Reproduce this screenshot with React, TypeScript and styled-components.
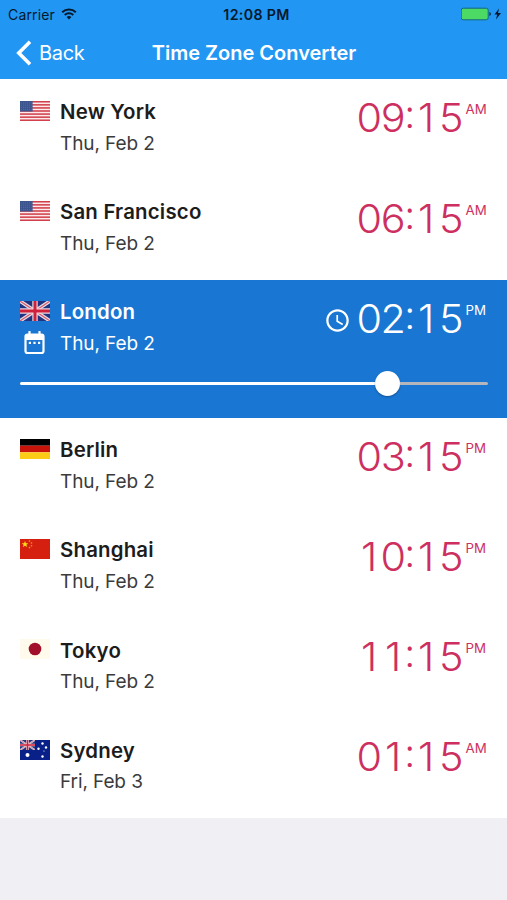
import React from "react";
import styled, { createGlobalStyle } from "styled-components";

const GlobalStyle = createGlobalStyle`
  * { box-sizing: border-box; }
  body {
    margin: 0;
    background: #efeff4;
    font-family: Inter, "Liberation Sans", sans-serif;
  }
`;

const Screen = styled.div`
  display: flex;
  flex-direction: column;
  width: 507px;
  height: 900px;
  overflow: hidden;
  background: #efeff4;
`;

const Header = styled.header`
  height: 79.4px;
  background: #2196f3;
`;

const StatusBar = styled.div`
  display: grid;
  grid-template-columns: 1fr auto 1fr;
  align-items: center;
  height: 27px;
  padding: 0 5px 0 8px;
  color: #06192c;
  font-size: 13.8px;
  line-height: 27px;
`;

const Carrier = styled.div`
  display: flex;
  align-items: center;
  gap: 6px;
  padding-top: 1px;
  font-size: 14px;
  letter-spacing: 0.15px;

  svg {
    margin-top: -2px;
  }
`;

const Clock = styled.div`
  font-size: 14.2px;
  font-weight: 600;
  letter-spacing: 0.35px;
  margin-left: 3px;
`;

const Power = styled.div`
  display: flex;
  justify-content: flex-end;
  align-items: center;
`;

const NavBar = styled.nav`
  display: grid;
  grid-template-columns: 137px 1fr 137px;
  align-items: center;
  height: 52px;
  color: #fff;
`;

const BackButton = styled.button`
  display: flex;
  align-items: center;
  gap: 7px;
  padding: 0 0 0 16px;
  border: 0;
  background: none;
  color: inherit;
  font: 400 20px/26px Inter, sans-serif;
  letter-spacing: -0.3px;
`;

const Title = styled.h1`
  margin: 0 0 0 1px;
  font-size: 20px;
  font-weight: 600;
  line-height: 26px;
  text-align: center;
  letter-spacing: 0;
  white-space: nowrap;
`;

const List = styled.ul`
  margin: 0;
  padding: 0;
  list-style: none;
`;

const Row = styled.li<{ $active: boolean }>`
  height: ${(p) => (p.$active ? "138px" : "100.13px")};
  padding: 19px 19px 0 20px;
  background: ${(p) => (p.$active ? "#1976d2" : "#fff")};
  color: ${(p) => (p.$active ? "#fff" : "#1c1c1c")};
`;

const RowMain = styled.div`
  display: grid;
  grid-template-columns: 40px 1fr auto;
  height: 64px;
`;

const IconColumn = styled.div`
  display: flex;
  flex-direction: column;
  gap: 9px;
  padding-top: 2.5px;
`;

const Place = styled.div`
  display: flex;
  flex-direction: column;
  padding-top: 0.7px;
`;

const City = styled.div`
  font-size: 20.4px;
  font-weight: 600;
  line-height: 26px;
  letter-spacing: 0.2px;
`;

const DateText = styled.div<{ $active: boolean }>`
  margin-top: 5.5px;
  font-size: 19px;
  line-height: 26px;
  letter-spacing: -0.1px;
  color: ${(p) => (p.$active ? "#fff" : "#3b3b3b")};
`;

const Time = styled.div<{ $active: boolean }>`
  display: flex;
  align-items: flex-start;
  color: ${(p) => (p.$active ? "#fff" : "#cd2f60")};
`;

const ClockSlot = styled.span`
  display: flex;
  margin: 8.5px 6px 0 0;
`;

const Digits = styled.span`
  display: flex;
  font-size: 39px;
  font-weight: 300;
  line-height: 40px;
  font-feature-settings: "case";
`;

const Glyph = styled.span<{ $narrow: boolean }>`
  display: flex;
  justify-content: center;
  width: ${(p) => (p.$narrow ? "8.8px" : "24.4px")};
  transform: ${(p) => (p.$narrow ? "none" : "scaleX(1.06)")};
`;

const Meridiem = styled.span`
  width: 25px;
  margin-top: 3px;
  padding-left: 2.5px;
  font-size: 13.3px;
  line-height: 16px;
  white-space: nowrap;
`;

const Slider = styled.div`
  display: flex;
  align-items: center;
  height: 42px;
`;

const TrackFill = styled.div`
  width: 355px;
  height: 3px;
  border-radius: 2px 0 0 2px;
  background: #fff;
`;

const Thumb = styled.div`
  width: 25px;
  height: 25px;
  border-radius: 50%;
  background: #fff;
  box-shadow: 0 1px 2px rgba(0, 0, 0, 0.3);
`;

const TrackRest = styled.div`
  flex: 1;
  height: 3px;
  border-radius: 0 2px 2px 0;
  background: #b4b6bc;
`;

const FlagSvg = styled.svg`
  display: block;
  width: 30px;
  height: 20px;
`;

const DateIcon = styled.svg`
  display: block;
  width: 21px;
  height: 24px;
  margin: 0.5px 0 0 4px;
`;

type Country = "us" | "gb" | "de" | "cn" | "jp" | "au";

function UnionJack() {
  return (
    <>
      <path fill="#20347f" d="M0 0h30v20H0z" />
      <path d="M0 0l30 20M30 0L0 20" stroke="#e3dde6" strokeWidth="3.6" />
      <path d="M0 0l30 20M30 0L0 20" stroke="#d8576c" strokeWidth="1.1" />
      <path d="M15 0v20M0 10h30" stroke="#efd5dc" strokeWidth="5.4" />
      <path d="M15 0v20M0 10h30" stroke="#d0213a" strokeWidth="3" />
    </>
  );
}

const flagArt: Record<Country, React.ReactNode> = {
  us: (
    <>
      <path fill="#fbe9eb" d="M0 0h30v20H0z" />
      {[0, 1, 2, 3, 4, 5, 6].map((i) => (
        <rect key={i} y={i * 3.077} width="30" height="1.54" fill="#d2404c" />
      ))}
      <path fill="#3c558f" d="M0 0h12.6v10.5H0z" />
      <path
        d="M1 2h11M1 4.2h11M1 6.4h11M1 8.6h11"
        stroke="#8493b8"
        strokeWidth=".5"
        strokeDasharray=".7 1.4"
      />
    </>
  ),
  gb: <UnionJack />,
  de: (
    <>
      <path d="M0 0h30v6.7H0z" />
      <path fill="#c8130b" d="M0 6.7h30v6.6H0z" />
      <path fill="#fccb16" d="M0 13.3h30V20H0z" />
    </>
  ),
  cn: (
    <>
      <path fill="#d5200f" d="M0 0h30v20H0z" />
      <path
        fill="#fddb16"
        d="M5 1.900l.9 2.300h2.400L6.400 5.700l.7 2.400L5 6.700 2.900 8.100l.7-2.400L1.700 4.200h2.400z"
      />
      <g fill="#f0a012">
        <circle cx="9.500" cy="2" r=".8" />
        <circle cx="11.500" cy="4" r=".8" />
        <circle cx="11.500" cy="6.700" r=".8" />
        <circle cx="9.500" cy="8.600" r=".8" />
      </g>
    </>
  ),
  jp: (
    <>
      <path fill="#fffaeb" d="M0 0h30v20H0z" />
      <circle cx="15" cy="10" r="6.3" fill="#a10f2b" />
    </>
  ),
  au: (
    <>
      <path fill="#082087" d="M0 0h30v20H0z" />
      <svg width="15" height="10" viewBox="0 0 30 20">
        <UnionJack />
      </svg>
      <g fill="#fff">
        <circle cx="7.500" cy="15" r="2" />
        <circle cx="22.500" cy="3.500" r="1.200" />
        <circle cx="18.500" cy="8.800" r="1.200" />
        <circle cx="26" cy="7.500" r="1.200" />
        <circle cx="24" cy="11" r=".6" />
        <circle cx="22.500" cy="16.500" r="1.200" />
      </g>
    </>
  ),
};

function Flag({ country }: { country: Country }) {
  return <FlagSvg viewBox="0 0 30 20">{flagArt[country]}</FlagSvg>;
}

interface Zone {
  city: string;
  country: Country;
  date: string;
  time: string;
  meridiem: "AM" | "PM";
  active?: boolean;
}

const zones: Zone[] = [
  { city: "New York", country: "us", date: "Thu, Feb 2", time: "09:15", meridiem: "AM" },
  { city: "San Francisco", country: "us", date: "Thu, Feb 2", time: "06:15", meridiem: "AM" },
  { city: "London", country: "gb", date: "Thu, Feb 2", time: "02:15", meridiem: "PM", active: true },
  { city: "Berlin", country: "de", date: "Thu, Feb 2", time: "03:15", meridiem: "PM" },
  { city: "Shanghai", country: "cn", date: "Thu, Feb 2", time: "10:15", meridiem: "PM" },
  { city: "Tokyo", country: "jp", date: "Thu, Feb 2", time: "11:15", meridiem: "PM" },
  { city: "Sydney", country: "au", date: "Fri, Feb 3", time: "01:15", meridiem: "AM" },
];

function ZoneRow({ zone }: { zone: Zone }) {
  const active = !!zone.active;
  return (
    <Row $active={active}>
      <RowMain>
        <IconColumn>
          <Flag country={zone.country} />
          {active && (
            <DateIcon viewBox="0 0 21 24" fill="none">
              <path d="M5.500 .8v4M15.500 .8v4" stroke="#fff" strokeWidth="2.200" strokeLinecap="round" />
              <rect x="1.500" y="3.700" width="18" height="18.300" rx="2" stroke="#fff" strokeWidth="2.200" />
              <path d="M1 4h19v5H1z" fill="#fff" />
              <path d="M4.800 11.900h2.200M9.400 11.900h2.200M14 11.900h2.200" stroke="#fff" strokeWidth="2.200" />
            </DateIcon>
          )}
        </IconColumn>
        <Place>
          <City>{zone.city}</City>
          <DateText $active={active}>{zone.date}</DateText>
        </Place>
        <Time $active={active}>
          {active && (
            <ClockSlot>
              <svg width="27" height="27" viewBox="0 0 24 24" fill="#fff">
                <path d="M11.990 2C6.470 2 2 6.480 2 12s4.470 10 9.990 10C17.520 22 22 17.520 22 12S17.520 2 11.990 2zM12 20c-4.420 0-8-3.580-8-8s3.580-8 8-8 8 3.580 8 8-3.580 8-8 8z" />
                <path d="M12.500 7H11v6l5.250 3.150.75-1.230-4.500-2.670z" />
              </svg>
            </ClockSlot>
          )}
          <Digits>
            {zone.time.split("").map((ch, i) => (
              <Glyph key={i} $narrow={ch === ":"}>
                {ch}
              </Glyph>
            ))}
          </Digits>
          <Meridiem>{zone.meridiem}</Meridiem>
        </Time>
      </RowMain>
      {active && (
        <Slider>
          <TrackFill />
          <Thumb />
          <TrackRest />
        </Slider>
      )}
    </Row>
  );
}

export default function App() {
  return (
    <Screen>
      <GlobalStyle />
      <Header>
        <StatusBar>
          <Carrier>
            Carrier
            <svg width="16" height="12" viewBox="0 0 16 12" fill="none" stroke="#06192c">
              <path d="M1.200 4.300a9.800 9.800 0 0 1 13.600 0" strokeWidth="2" />
              <path d="M3.700 7a6.200 6.200 0 0 1 8.600 0" strokeWidth="1.900" />
              <path d="M5.600 9.100a3.500 3.500 0 0 1 4.800 0L8 11.600z" fill="#06192c" stroke="none" />
            </svg>
          </Carrier>
          <Clock>12:08 PM</Clock>
          <Power>
            <svg width="41" height="14" viewBox="0 0 41 14">
              <rect x=".2" y="1.200" width="27" height="11.600" rx="2" fill="#4cd964" stroke="#14697a" />
              <path d="M28.500 5a2.200 2.200 0 0 1 0 4z" fill="#06192c" />
              <path d="M38 1.500l-4.500 6h2.700L35 12.500l5-6.500h-3z" fill="#06192c" />
            </svg>
          </Power>
        </StatusBar>
        <NavBar>
          <BackButton>
            <svg width="16" height="26" viewBox="0 0 16 26" fill="none" stroke="#fff" strokeWidth="3.600">
              <path d="M14 1.800L2.800 13 14 24.200" />
            </svg>
            Back
          </BackButton>
          <Title>Time Zone Converter</Title>
        </NavBar>
      </Header>
      <List>
        {zones.map((z) => (
          <ZoneRow key={z.city} zone={z} />
        ))}
      </List>
    </Screen>
  );
}
